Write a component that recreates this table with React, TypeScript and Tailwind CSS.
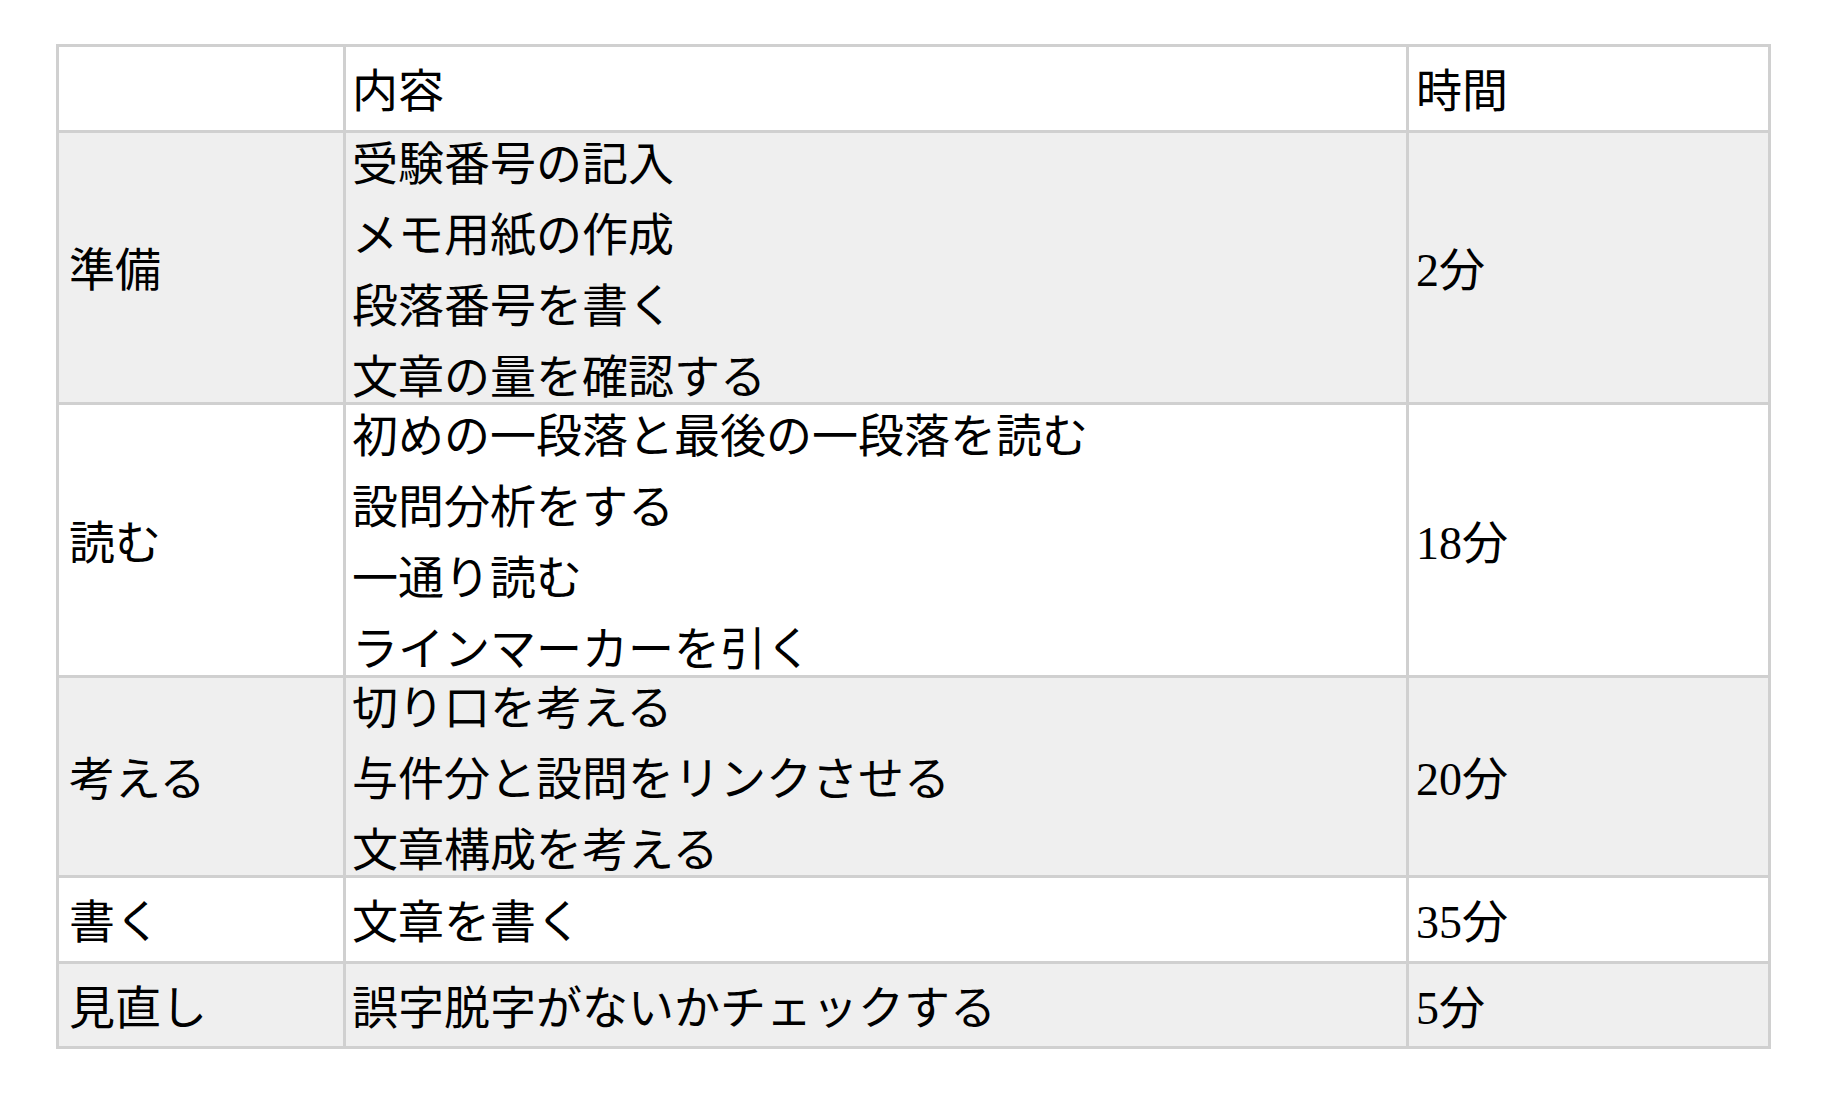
type Row = {
  label: string;
  items: string[];
  time: string;
  h: string;
  bg: string;
};

const rows: Row[] = [
  {
    label: "準備",
    items: ["受験番号の記入", "メモ用紙の作成", "段落番号を書く", "文章の量を確認する"],
    time: "2分",
    h: "h-[272px]",
    bg: "bg-[#efefef]",
  },
  {
    label: "読む",
    items: ["初めの一段落と最後の一段落を読む", "設問分析をする", "一通り読む", "ラインマーカーを引く"],
    time: "18分",
    h: "h-[273px]",
    bg: "bg-white",
  },
  {
    label: "考える",
    items: ["切り口を考える", "与件分と設問をリンクさせる", "文章構成を考える"],
    time: "20分",
    h: "h-[200px]",
    bg: "bg-[#efefef]",
  },
  {
    label: "書く",
    items: ["文章を書く"],
    time: "35分",
    h: "h-[86px]",
    bg: "bg-white",
  },
  {
    label: "見直し",
    items: ["誤字脱字がないかチェックする"],
    time: "5分",
    h: "h-[85px]",
    bg: "bg-[#efefef]",
  },
];

const font = { fontFamily: '"Liberation Serif", "Noto Sans CJK JP", serif' };

export default function App() {
  return (
    <div className="min-h-screen bg-white pt-[44px] pl-[56px] text-black" style={font}>
      <div className="w-[1715px] border-[3px] border-[#d0d0d0] text-[46px] leading-[71px]">
        {/* header */}
        <div className="flex h-[83px] bg-white">
          <div className="w-[284px] shrink-0" />
          <div className="flex w-[1063px] shrink-0 items-center border-l-[3px] border-[#d0d0d0] pt-[6px] pl-[6px]">内容</div>
          <div className="flex w-[362px] shrink-0 items-center border-l-[3px] border-[#d0d0d0] pt-[6px] pl-[7px]">時間</div>
        </div>

        {rows.map((row) => (
          <div key={row.label} className={`flex border-t-[3px] border-[#d0d0d0] ${row.h} ${row.bg}`}>
            <div className="flex w-[284px] shrink-0 items-center pt-[6px] pl-[10px]">{row.label}</div>
            <div className="flex w-[1063px] shrink-0 flex-col justify-center border-l-[3px] border-[#d0d0d0] pt-[6px] pl-[6px]">
              {row.items.map((item) => (
                <div key={item} className="whitespace-nowrap">{item}</div>
              ))}
            </div>
            <div className="flex w-[362px] shrink-0 items-center border-l-[3px] border-[#d0d0d0] pt-[6px] pl-[7px]">{row.time}</div>
          </div>
        ))}
      </div>
    </div>
  );
}
